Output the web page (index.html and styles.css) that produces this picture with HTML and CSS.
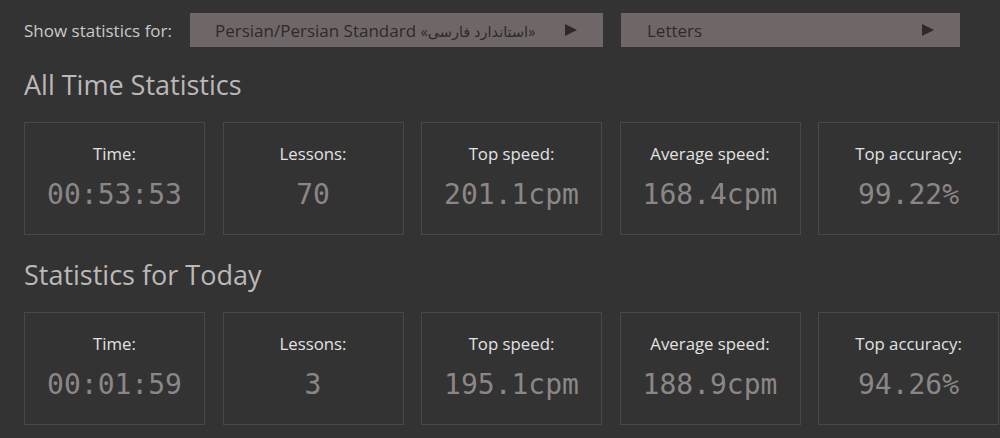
FILE: index.html
```html
<!DOCTYPE html>
<html>
<head>
<meta charset="utf-8">
<link rel="stylesheet" href="styles.css">
</head>
<body>
<div class="page">
  <div class="filter">
    <span class="filter-label">Show statistics for:</span>
    <div class="select select-layout"><span class="select-text">Persian/Persian Standard <span class="native-name">«استاندارد فارسی»</span></span><span class="arrow"></span></div>
    <div class="select select-mode"><span class="select-text">Letters</span><span class="arrow"></span></div>
  </div>

  <h2 class="section-title">All Time Statistics</h2>
  <div class="cards">
    <div class="card"><div class="card-label">Time:</div><div class="card-value">00:53:53</div></div>
    <div class="card"><div class="card-label">Lessons:</div><div class="card-value">70</div></div>
    <div class="card"><div class="card-label">Top speed:</div><div class="card-value">201.1cpm</div></div>
    <div class="card"><div class="card-label">Average speed:</div><div class="card-value">168.4cpm</div></div>
    <div class="card"><div class="card-label">Top accuracy:</div><div class="card-value">99.22%</div></div>
  </div>

  <h2 class="section-title">Statistics for Today</h2>
  <div class="cards">
    <div class="card"><div class="card-label">Time:</div><div class="card-value">00:01:59</div></div>
    <div class="card"><div class="card-label">Lessons:</div><div class="card-value">3</div></div>
    <div class="card"><div class="card-label">Top speed:</div><div class="card-value">195.1cpm</div></div>
    <div class="card"><div class="card-label">Average speed:</div><div class="card-value">188.9cpm</div></div>
    <div class="card"><div class="card-label">Top accuracy:</div><div class="card-value">94.26%</div></div>
  </div>
</div>
</body>
</html>
```

FILE: styles.css
```css
html, body {
  margin: 0;
  padding: 0;
  background: #333333;
  overflow: hidden;
}
body {
  font-family: "Open Sans", "DejaVu Sans", sans-serif;
  color: #d8d8d8;
}
.page {
  width: 1000px;
  height: 438px;
  padding: 13px 0 0 24px;
  box-sizing: border-box;
}
.filter {
  display: flex;
  align-items: center;
  height: 34px;
}
.filter-label {
  font-size: 17px;
  color: #c9c9c9;
  width: 166px;
  white-space: nowrap;
}
.select {
  height: 34px;
  background: #6f6767;
  color: #2e2a2a;
  display: flex;
  align-items: center;
  box-sizing: border-box;
  font-size: 17px;
}
.select-layout {
  width: 413px;
  padding: 0 26px 0 25px;
}
.select-mode {
  width: 339px;
  margin-left: 18px;
  padding: 0 26px 0 26px;
}
.select-text {
  flex: 1;
  white-space: nowrap;
}
.native-name {
  font-size: 14.5px;
}
.arrow {
  width: 0;
  height: 0;
  border-top: 6.5px solid transparent;
  border-bottom: 6.5px solid transparent;
  border-left: 12px solid #2e2a2a;
}
.section-title {
  margin: 21px 0 0 0;
  font-weight: normal;
  font-size: 27px;
  line-height: 34px;
  color: #bcb8b8;
}
.cards {
  display: grid;
  grid-template-columns: repeat(5, 181px);
  column-gap: 17.5px;
  margin-top: 20px;
}
.card {
  height: 113px;
  border: 1px solid #484848;
  box-sizing: border-box;
  display: flex;
  flex-direction: column;
  align-items: center;
  padding-top: 21px;
}
.card-label {
  font-size: 16.8px;
  line-height: 20px;
  color: #e2e2e2;
}
.card-value {
  margin-top: 14px;
  font-family: "DejaVu Sans Mono", monospace;
  font-size: 28px;
  line-height: 34px;
  color: #8c8686;
}
.cards + .section-title {
  margin-top: 23px;
}
```
